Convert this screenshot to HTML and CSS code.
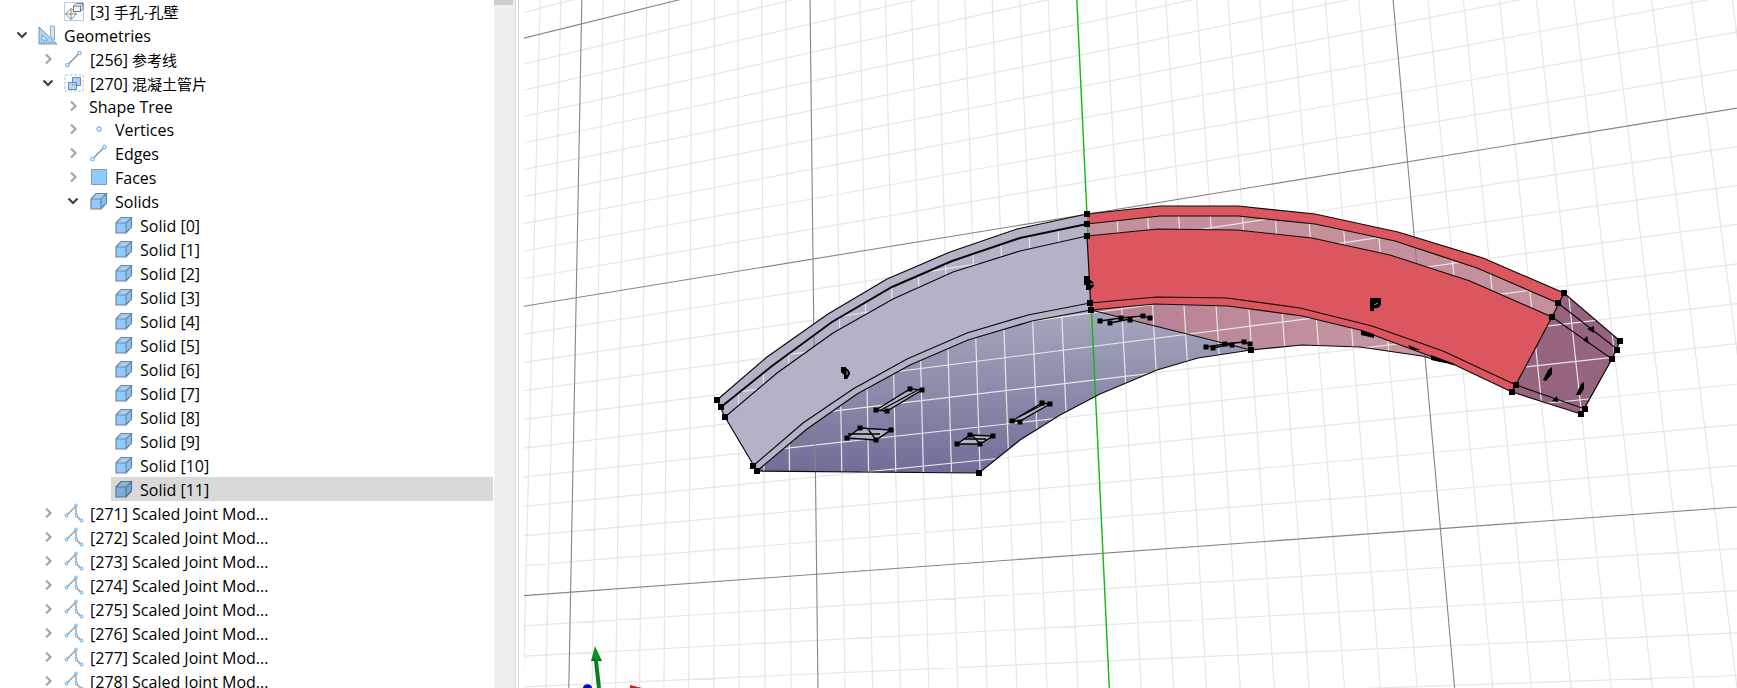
FILE: index.html
```html
<!DOCTYPE html>
<html lang="zh-CN">
<head>
<meta charset="utf-8">
<title>Model Explorer</title>
<link rel="stylesheet" href="styles.css">
</head>
<body>
<svg class="defs" aria-hidden="true">
  <symbol id="open" viewBox="0 0 12 12"><path d="M1.500 3.500 6 8l4.500-4.500" fill="none" stroke="#404040" stroke-width="2.200"/></symbol>
  <symbol id="closed" viewBox="0 0 12 12"><path d="M4 1.500 8.500 6 4 10.500" fill="none" stroke="#a6a6a6" stroke-width="2.200"/></symbol>
  <symbol id="solid" viewBox="0 0 20 20"><path d="M2 8h10v10H2z" fill="#90caff"/><path d="M2 8l5-5.500h10.500L12 8z" fill="#a0d1ff"/><path d="M12 8l5.500-5.500V12L12 18z" fill="#84bff5"/><path d="M2 8h10v10H2zM2 8l5-5.500h10.500L12 8M17.500 2.500V12L12 18" fill="none" stroke="#6d87a0" stroke-width="1.200"/></symbol>
  <symbol id="face" viewBox="0 0 20 20"><path d="M2.500 2.500h15v15h-15z" fill="#90caff" stroke="#8899a8"/></symbol>
  <symbol id="edge" viewBox="0 0 20 20"><path d="M5 14.500 14.500 5" stroke="#8a8a8a" stroke-width="1.200"/><circle cx="3.500" cy="16" r="1.700" fill="#fff" stroke="#79bdf8" stroke-width="1.300"/><circle cx="15.500" cy="4" r="1.700" fill="#fff" stroke="#79bdf8" stroke-width="1.300"/></symbol>
  <symbol id="vertex" viewBox="0 0 20 20"><circle cx="10" cy="10" r="2" fill="#fff" stroke="#79bdf8" stroke-width="1.300"/></symbol>
  <symbol id="joint" viewBox="0 0 20 20"><path d="M2.500 12.500 12 3v9.500l5.500 5.500" fill="none" stroke="#8f8f8f" stroke-width="1.200"/><circle cx="12" cy="2.500" r="2" fill="#90caff"/><g fill="#fff" stroke="#79bdf8" stroke-width="1.200"><circle cx="2.500" cy="12.500" r="1.300"/><circle cx="12.500" cy="12.500" r="1.300"/><circle cx="17.500" cy="17.500" r="1.300"/></g></symbol>
  <symbol id="boolean" viewBox="0 0 20 20"><path d="M1 2h18v16H1z" fill="none" stroke="#a9c4da" stroke-dasharray="3 1.500"/><path d="M8.500 4.500h8v8h-8z" fill="#a5d3fc" stroke="#71879b"/><path d="M4.500 9.500h8v7h-8z" fill="#90caff" fill-opacity=".7" stroke="#71879b"/></symbol>
  <symbol id="geometry" viewBox="0 0 20 20"><path d="M1 2v17h18z" fill="#a9d5fb" stroke="#8095a8"/><path d="M4 10v5h5.500z" fill="#fff" stroke="#8095a8"/><path d="M12.500 1h4v14l-4-4z" fill="#cce6fc" stroke="#9aa9b6"/><path d="M3 17.500h13" stroke="#4b9fe8" stroke-width="1.500" stroke-dasharray="1 1.500"/></symbol>
  <symbol id="mesh" viewBox="0 0 20 20"><path d="M.5 1.500h19v18H.5z" fill="none" stroke="#a9d2f5"/><path d="M1.500 13 7 7.500l5.500 5.500L7 18.500zM1.500 13h11M7 7.500v11" fill="#fff" stroke="#858585"/><path d="M9.500 5 12 2.500h7V8l-2.500 2.500h-7zM9.500 5h7L19 2.500M16.500 5v5.500" fill="#eef6fd" stroke="#777"/></symbol>
</svg>
<main class="app">
  <nav class="tree" aria-label="Model tree">
    <ul class="rows" id="rows"></ul>
  </nav>
  <div class="scrollbar"><div class="thumb"></div></div>
  <section class="viewport" aria-label="3D view">
    <svg class="scene" viewBox="524 0 1213 688" preserveAspectRatio="xMinYMin slice">
      <defs>
        <linearGradient id="inner" x1="0" y1="0" x2="0" y2="1"><stop offset="0" stop-color="#a5a7be"/><stop offset="1" stop-color="#706e97"/></linearGradient>
        <linearGradient id="pink" x1="0" y1="0" x2="1" y2="0"><stop offset="0" stop-color="#b57f92"/><stop offset="1" stop-color="#c99aa6"/></linearGradient>
      </defs>
      <g>
        <path fill="url(#inner)" d="M757 471 807 429 857 394 910 365 968 340 1032 321 1091 310 1251 350 1198 358 1157 370 1100 394 1060 415 1020 440 979 473Z"/>
        <path fill="url(#pink)" d="M1091 310 1155 304 1228 306 1302 316 1360 330 1455 365 1422 356 1360 347 1302 345 1251 350Z"/>
        <path fill="#b3b2c6" d="M721 407 772 366 832 322 892 287 952 261 1020 238 1087 224V236L1020 251 953 272 893 299 833 333 777 373 725 417Z"/>
        <path fill="#c5909c" d="M1087 224 1160 216H1238L1315 224 1395 241 1477 268 1558 303 1552 317 1470 281 1390 255 1312 238 1237 230 1158 229 1087 236Z"/>
        <path fill="#96647f" d="M1564 293 1620 341 1617 349 1612 359 1585 409 1581 414 1512 392 1516 385 1552 317 1558 303Z"/>
      </g>
      <g id="grid" fill="none"></g>
      <g>
        <path fill="#b3b2c6" d="M717 400 767 357 828 314 887 279 950 252 1017 229 1087 214V224L1020 238 952 261 892 287 832 322 772 366 721 407Z"/>
        <path fill="#b3b2c6" d="M725 417 777 373 833 333 893 299 953 272 1020 251 1087 236 1091 310 1032 321 968 340 910 365 857 394 807 429 757 471Z"/>
        <path fill="#dc565f" d="M1087 214 1160 206H1238L1315 214 1398 232 1483 258 1564 293 1558 303 1477 268 1395 241 1315 224 1238 216H1160L1087 224Z"/>
        <path fill="#dc565f" d="M1087 236 1158 229 1237 230 1312 238 1390 255 1470 281 1552 317 1516 385 1512 392 1455 365 1422 353 1360 330 1302 316 1228 306 1155 304 1091 310Z"/>
      </g>
      <g class="edges">
        <path d="M717 400 767 357 828 314 887 279 950 252 1017 229 1087 214 1160 206H1238L1315 214 1398 232 1483 258 1564 293 1620 341"/>
        <path class="heavy" d="M721 407 772 366 832 322 892 287 952 261 1020 238 1087 224"/>
        <path d="M1087 224 1160 216H1238L1315 224 1395 241 1477 268 1558 303 1617 349"/>
        <path d="M725 417 777 373 833 333 893 299 953 272 1020 251 1087 236 1158 229 1237 230 1312 238 1390 255 1470 281 1552 317 1612 359"/>
        <path d="M753 466 803 423 853 389 907 359 967 333 1028 315 1090 303 1157 297 1227 298 1300 308 1372 326 1443 351 1516 385 1585 409"/>
        <path d="M757 471 807 429 857 394 910 365 968 340 1032 321 1091 310 1155 304 1228 306 1302 316 1360 330 1422 353 1455 365 1512 392 1581 414"/>
        <path d="M717 400 725 417 757 471 979 473 1020 440 1060 415 1100 394 1157 370 1198 358 1251 350 1302 345 1360 347 1422 356 1455 365"/>
        <path d="M1091 310 1251 350M1087 236 1091 310M1564 293 1552 317 1512 392M1620 341 1612 359 1581 414"/>
      </g>
      <g class="pockets">
        <path d="M876 410 910 389 922 390 887 411ZM881 410 918 390M847 438 860 428 891 430 876 440ZM848 434H880M868 429 876 440M876 440 889 431"/>
        <path d="M1012 421 1042 403 1050 404 1020 421ZM1019 417 1046 403M957 444 970 435 993 436 980 444ZM963 439H986M972 435 980 444"/>
        <path d="M1100 321 1121 318 1143 316 1150 318M1110 323 1130 319M1206 347 1225 344 1244 342 1250 344M1213 348 1232 344"/>
      </g>
      <path d="M1361 330 1374 334V338L1361 335ZM1408 345 1421 350H1411ZM1431 355 1455 364 1440 362 1431 360ZM1543 380 1548 370 1552 367V374L1546 381ZM1576 395 1581 384 1584 382V389L1580 395ZM1587 329 1594 326V333ZM1583 340 1587 336 1589 344ZM1552 401 1557 396 1558 402Z"/>
      <g id="marks"></g>
      <g>
        <path d="M841 367h5v1c4 2 5 6 3 8l-2 3h-3v-4l-3-3zM1084 276h6v4c5 2 5 6 2 8l-2 2h-4v-5h-2zM1370 298h11v5c0 4-4 6-7 5v3h-4z"/>
        <path d="M847 371v4M1090 284h4M1374 305l4-2" stroke="#999"/>
      </g>
      <g>
        <path d="M596 661 599 688" stroke="#087f1a" stroke-width="4"/><path d="M595 646 602 661 591 661Z" fill="#0b9222"/><path d="M591 661l3-3 3 3 3-2 2 2z" fill="#066113"/>
        <path d="M583 688c0-5 9-5 9 0z" fill="#0505c8"/><path d="M630 685 642 688H630Z" fill="#d51a1a"/>
      </g>
    </svg>
  </section>
</main>
<script src="app.js"></script>
</body>
</html>
```

FILE: styles.css
```css
* { box-sizing: border-box; }
body { margin: 0; background: #fff; color: #000; font: 16px/22px "Open Sans", "Noto Sans CJK SC", sans-serif; }
.defs { position: absolute; width: 0; height: 0; }
.app { display: flex; height: 100vh; overflow: hidden; }
.tree { flex: 0 0 494px; overflow: hidden; padding-right: 1px; }
.rows { list-style: none; margin: -1px 0 0; padding: 0; }
.row { display: flex; align-items: center; height: 24px; }
.row.plain { height: 22px; }
.level1 { padding-left: 16px; }
.level2 { padding-left: 42px; }
.level3 { padding-left: 67px; }
.level4 { padding-left: 86px; }
.twisty { display: flex; width: 22px; padding: 0; border: 0; background: none; }
.twisty svg { width: 12px; height: 12px; }
.item { display: flex; flex: 1; align-items: center; gap: 6px; height: 100%; white-space: nowrap; }
.level4 .item { margin-left: 3px; padding-left: 3px; }
.item svg { width: 20px; height: 20px; }
.label { padding-top: 2px; }
.cjk { font-size: 15px; }
.selected .item { background: #d9d9d9; }
.selected .item svg { filter: brightness(.86); }
.scrollbar { flex: 0 0 22px; background: #efefef; border-right: 1px solid #dcdcdc; }
.thumb { width: 19px; height: 5px; background: #cdcdcd; }
.viewport { flex: 1; min-width: 0; margin-left: 2px; padding-left: 5px; border-left: 1px solid #d0d0d0; }
.scene { display: block; width: 100%; height: 100%; }
.edges { fill: none; stroke: #0b0b0b; stroke-width: 1.2; }
.heavy { stroke-width: 2; }
.pockets { fill: #b3b2c6; stroke: #000; stroke-width: 1.3; }
.minor { stroke: #e6e6e6; stroke-width: 1.2; }
.major { stroke: #858585; stroke-width: 1.1; }
.axis { stroke: #12b812; stroke-width: 1.4; }
```

FILE: app.js
```js
const range = (from, count, make) => Array.from({ length: count }, (_, i) => make(from + i));
const items = [
  [2, "", "mesh", "[3] 手孔-孔壁"],
  [1, "open", "geometry", "Geometries"],
  [2, "closed", "edge", "[256] 参考线"],
  [2, "open", "boolean", "[270] 混凝土管片"],
  [3, "closed", "", "Shape Tree"],
  [3, "closed", "vertex", "Vertices"],
  [3, "closed", "edge", "Edges"],
  [3, "closed", "face", "Faces"],
  [3, "open", "solid", "Solids"],
  ...range(0, 12, n => [4, "", "solid", `Solid [${n}]`, n === 11]),
  ...range(271, 8, n => [2, "closed", "joint", `[${n}] Scaled Joint Mod...`])
];
const use = id => `<svg aria-hidden="true"><use href="#${id}"/></svg>`;
const text = label => label.replace(/[\u4e00-\u9fff-]+/g, s => `<span class="cjk">${s}</span>`);
document.getElementById("rows").innerHTML = items.map(([level, state, icon, label, selected]) => {
  const twisty = state
    ? `<button class="twisty" aria-label="${label}" aria-expanded="${state === "open"}">${use(state)}</button>`
    : `<span class="twisty"></span>`;
  return `<li class="row level${level}${icon ? "" : " plain"}${selected ? " selected" : ""}">${twisty}<span class="item">${icon ? use(icon) : ""}<span class="label">${text(label)}</span></span></li>`;
}).join("");

// Ground plane: [u, v, x, y] anchors define the perspective mapping.
const anchors = [
  [0, 0, 581.2, 24], [0, 1, 576.3, 297.4], [0, 2, 570.5, 592],
  [1, 1, 813.3, 259.3], [1, 2, 816.6, 574.3], [2, 2, 1102.8, 553.7],
  [3, 1, 1407.5, 161.7], [3, 2, 1440.4, 528.3]
];
const system = Array.from({ length: 8 }, () => Array(9).fill(0));
for (const [u, v, x, y] of anchors) {
  for (const r of [[u, v, 1, 0, 0, 0, -u * x, -v * x, x], [0, 0, 0, u, v, 1, -u * y, -v * y, y]]) {
    for (let i = 0; i < 8; i++) for (let j = 0; j < 9; j++) system[i][j] += r[i] * r[j];
  }
}
for (let c = 0; c < 8; c++) {
  let p = c;
  for (let r = c; r < 8; r++) if (Math.abs(system[r][c]) > Math.abs(system[p][c])) p = r;
  [system[c], system[p]] = [system[p], system[c]];
  for (let r = 0; r < 8; r++) {
    if (r === c) continue;
    const f = system[r][c] / system[c][c];
    for (let j = c; j < 9; j++) system[r][j] -= f * system[c][j];
  }
}
const h = system.map((row, i) => row[8] / row[i]);
const project = (u, v) => {
  const w = h[6] * u + h[7] * v + 1;
  return `${((h[0] * u + h[1] * v + h[2]) / w).toFixed(1)} ${((h[3] * u + h[4] * v + h[5]) / w).toFixed(1)}`;
};
const minor = [], major = [];
for (let i = -10; i <= 50; i++) {
  if (i === 20) continue;
  (i % 10 ? minor : major).push(`M${project(i / 10, -1)}L${project(i / 10, 3)}`);
}
for (let i = -10; i <= 30; i++) (i % 10 ? minor : major).push(`M${project(-1, i / 10)}L${project(5, i / 10)}`);
document.getElementById("grid").innerHTML =
  `<path class="minor" d="${minor.join("")}"/><path class="major" d="${major.join("")}"/><path class="axis" d="M${project(2, -1)}L${project(2, 3)}"/>`;

const square = (size, points) => points.map(([x, y]) => `<rect x="${x - size / 2}" y="${y - size / 2}" width="${size}" height="${size}"/>`).join("");
document.getElementById("marks").innerHTML =
  square(6, [[717, 400], [721, 407], [725, 417], [753, 466], [757, 471], [979, 473], [1087, 214], [1087, 224], [1087, 236], [1090, 303], [1091, 310], [1251, 350], [1564, 293], [1558, 303], [1552, 317], [1516, 385], [1512, 392], [1620, 341], [1617, 350], [1612, 359], [1585, 409], [1581, 414]]) +
  square(5, [[876, 410], [887, 411], [910, 389], [922, 390], [847, 438], [860, 428], [891, 430], [876, 440], [1012, 421], [1020, 422], [1042, 403], [1050, 404], [957, 444], [970, 435], [993, 436], [980, 444], [1100, 321], [1110, 323], [1121, 318], [1130, 320], [1143, 316], [1150, 318], [1206, 347], [1213, 348], [1225, 344], [1232, 345], [1244, 342], [1250, 344]]);
```
